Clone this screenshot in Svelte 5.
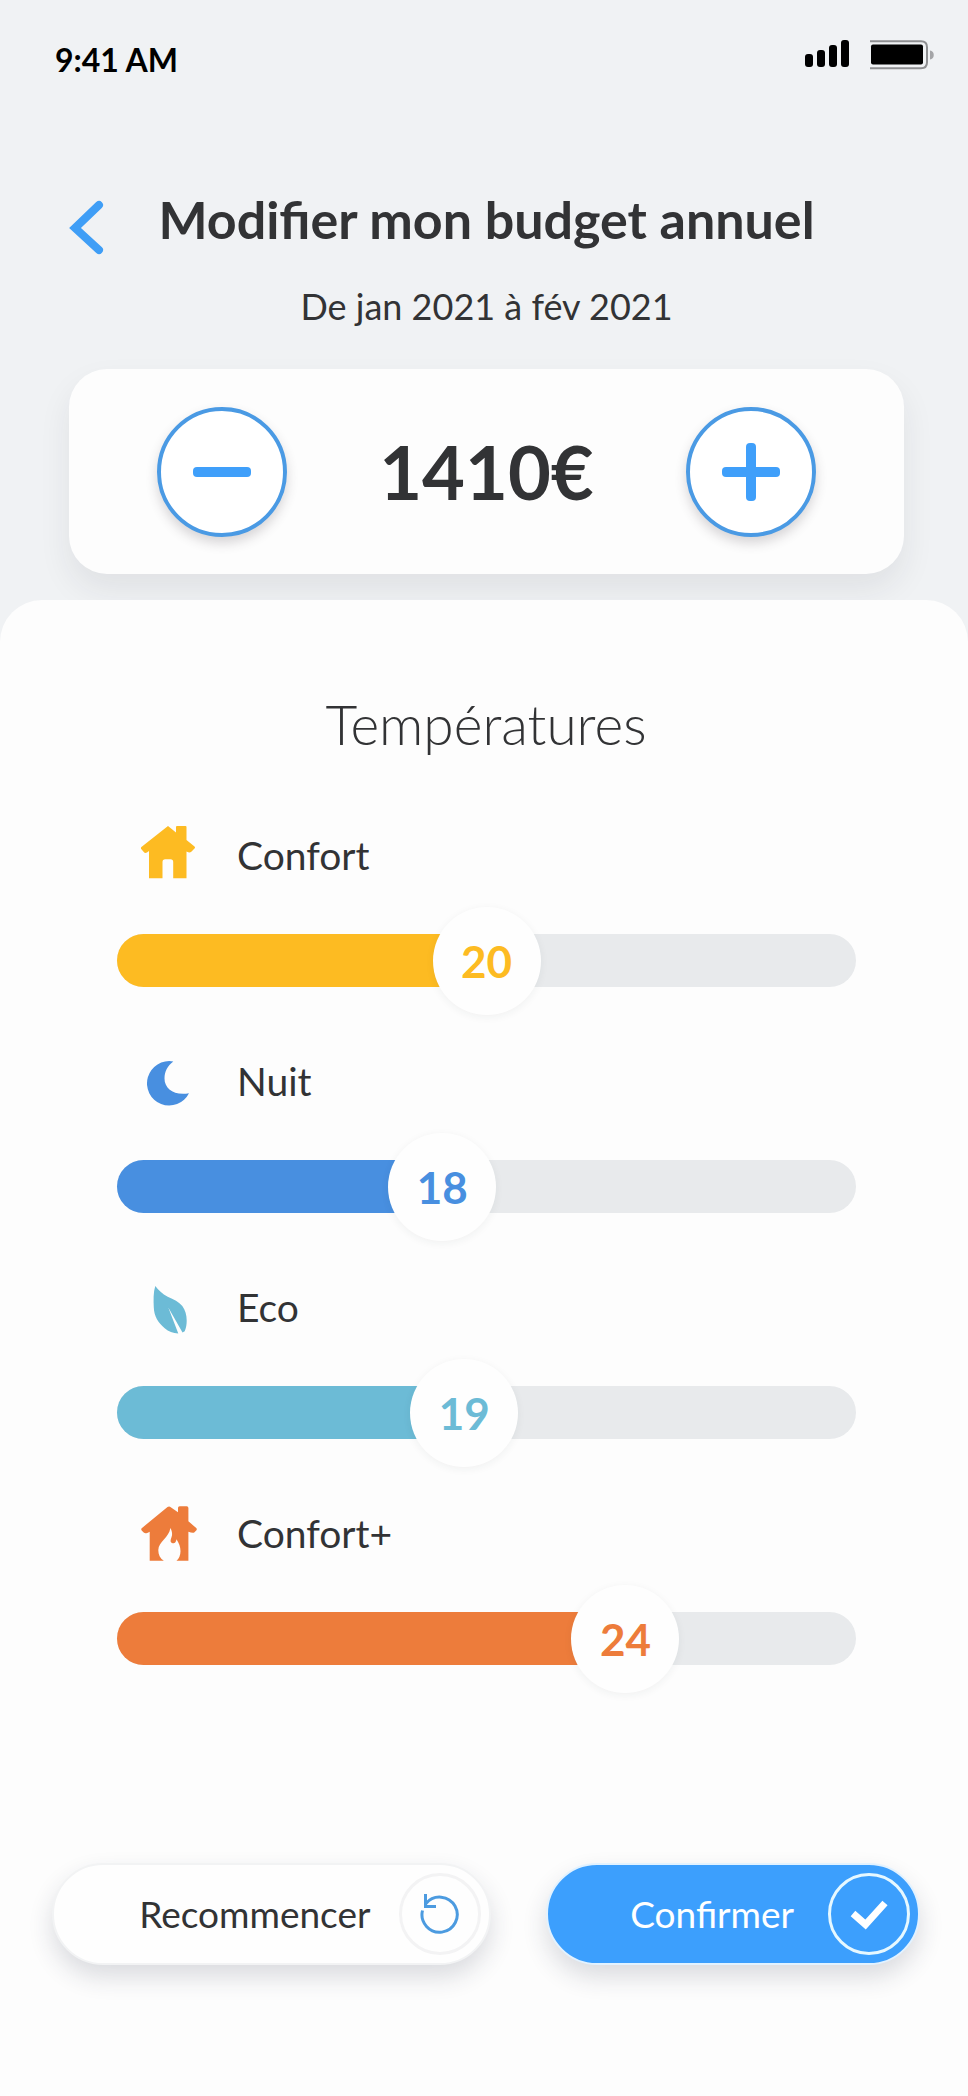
<script lang="ts">
  type Zone = { id: string; label: string; temp: number };

  const DEFAULT_BUDGET = 1410;
  const DEFAULT_ZONES: Zone[] = [
    { id: 'confort', label: 'Confort', temp: 20 },
    { id: 'nuit', label: 'Nuit', temp: 18 },
    { id: 'eco', label: 'Eco', temp: 19 },
    { id: 'confort-plus', label: 'Confort+', temp: 24 }
  ];

  let budget = $state(DEFAULT_BUDGET);
  let zones = $state(DEFAULT_ZONES.map((z) => ({ ...z })));

  // 20° sits in the middle, the warm side of the scale is wider
  function position(temp: number) {
    return temp <= 20 ? 50 + (temp - 20) * 3 : 50 + (temp - 20) * 4.7;
  }

  function reset() {
    budget = DEFAULT_BUDGET;
    zones = DEFAULT_ZONES.map((z) => ({ ...z }));
  }
</script>

<div class="screen">
  <div class="status">
    <span class="time">9:41 AM</span>
    <span class="indicators">
      <svg width="44" height="28" viewBox="0 0 44 28">
        <rect x="0" y="14" width="8" height="13" rx="3"/>
        <rect x="12" y="10" width="8" height="17" rx="3"/>
        <rect x="24" y="5" width="8" height="22" rx="3"/>
        <rect x="36" y="0" width="8" height="27" rx="3"/>
      </svg>
      <svg width="65" height="30" viewBox="0 0 65 30">
        <path d="M0 1.2h51q6 0 6 6v15q0 6-6 6H0" fill="none" stroke="#8e8f91" stroke-width="2"/>
        <rect x="1" y="4.500" width="52" height="20" rx="2"/>
        <path d="M60 10.500c5 0 5 9 0 9z" fill="#a4a5a7"/>
      </svg>
    </span>
  </div>

  <header>
    <button class="back" aria-label="Retour">
      <svg width="36" height="56" viewBox="0 0 36 56">
        <path d="M30 10L6 33l24 22" fill="none" stroke="#3f9ef6" stroke-width="8" stroke-linecap="round"/>
      </svg>
    </button>
    <h1>Modifier mon budget annuel</h1>
  </header>
  <p class="period">De jan 2021 à fév 2021</p>

  <section class="budget">
    <button class="round" aria-label="Diminuer" onclick={() => (budget -= 10)}>
      <svg width="58" height="58" viewBox="0 0 58 58">
        <rect x="0" y="24" width="58" height="10" rx="4"/>
      </svg>
    </button>
    <output class="amount">{budget}€</output>
    <button class="round" aria-label="Augmenter" onclick={() => (budget += 10)}>
      <svg width="58" height="58" viewBox="0 0 58 58">
        <rect x="0" y="24" width="58" height="10" rx="4"/>
        <rect x="24" y="0" width="10" height="58" rx="4"/>
      </svg>
    </button>
  </section>

  <main>
    <h2>Températures</h2>

    <div class="zones">
      {#each zones as zone (zone.id)}
        <div class="zone {zone.id}">
          <label for={zone.id}>
            <svg width="56" height="58" viewBox="0 0 56 58">
              {#if zone.id === 'confort'}
                <path d="M27 0l8 6.500V1q0-1 1-1h8.500q1 0 1 1v13l8 6.500q1 1 0 2l-3.500 3.600q-1.500 1.200-4.500-.6v26.800H32.200V36q0-2.700-2.700-2.700h-5.300q-2.700 0-2.700 2.700v16.300H8V25q-3.500 3-5 1.300L.2 23q-.9-1 .2-2z"/>
              {:else if zone.id === 'nuit'}
                <path d="M32.300 9.500A22.200 22.200 0 1 0 48 41.300C33 44 23.500 36.500 23.500 26.500c0-7 3-12.500 8.800-17z"/>
              {:else if zone.id === 'eco'}
                <path d="M14.300 8c3 4 7 8 12.400 10.700 6 2.600 11.300 5 14.600 9.300 3 4 4.400 9 4.400 14.500 0 4-.6 7.500-2 10.800l-2.200 1.200-14.200-25 10 26c-5.300-.2-9.800-2-13.600-5.200C17 44.500 13 38 12.800 29.500c-.3-7-.6-15 1.500-21.500z"/>
              {:else}
                <path d="M29 2.700l8 5.600V4q0-1.700 1.700-1.700h7q1.700 0 1.700 1.700v13.300l7.800 6.700q1.200 1.200 0 2.500l-2 2q-1.500 1-5.800-.8v29H35.500c2.500-2 4-5.600 4-9.500 0-4.500-1.500-8-4-12-.5 3-1.600 4.300-3.600 4-3-.3-2.600-3-1.500-5.700 1.200-3 .8-6-1-9.500-.8 5-3.500 8-6.500 11.500-3 3.300-5.500 6.300-5.600 10.500 0 4.500 1.700 8.300 5.500 10.700H8.700v-29c-3.600 2-4.500 2-6 .8l-2-2q-1-1.200 0-2.300L26.500 3q1.300-.9 2.500-.3z"/>
              {/if}
            </svg>
            {zone.label}
          </label>
          <div class="slider">
            <div class="fill" style="width: {position(zone.temp)}%"></div>
            <output class="thumb" for={zone.id} style="left: {position(zone.temp)}%">{zone.temp}</output>
            <input id={zone.id} type="range" min="10" max="30" bind:value={zone.temp}/>
          </div>
        </div>
      {/each}
    </div>

    <div class="actions">
      <button class="action restart" onclick={reset}>
        Recommencer
        <span class="badge">
          <svg width="40" height="40" viewBox="0 0 40 40" fill="none" stroke="#4c9be0" stroke-width="3">
            <path d="M2.500 16.500A17.600 17.600 0 1 0 6 9.500"/>
            <path d="M5.500 0v12.500h10.500"/>
          </svg>
        </span>
      </button>
      <button class="action confirm">
        Confirmer
        <span class="badge">
          <svg width="40" height="40" viewBox="0 0 40 40" fill="none" stroke="#fff" stroke-width="7">
            <path d="M4 19.500l12.500 11L36 9"/>
          </svg>
        </span>
      </button>
    </div>
  </main>
</div>

<style>
  :global(body) {
    margin: 0;
    background: #f0f2f4;
  }

  .screen {
    display: flex;
    flex-direction: column;
    min-height: 100vh;
    font-family: Lato, 'Liberation Sans', sans-serif;
    color: #323335;
    background: #f0f2f4;
  }

  button {
    padding: 0;
    border: none;
    background: none;
    font: inherit;
    color: inherit;
    cursor: pointer;
  }

  svg {
    display: block;
    flex-shrink: 0;
  }

  .status {
    display: flex;
    justify-content: space-between;
    padding: 40px 33px 0 55px;
    color: #000;
  }

  .time {
    font-size: 32px;
    font-weight: 700;
    line-height: 40px;
  }

  .indicators {
    display: flex;
    gap: 21px;
  }

  header {
    display: grid;
    grid-template-columns: 48px 1fr 48px;
    padding: 107px 64px 0 69px;
  }

  .back {
    display: flex;
    align-items: flex-end;
  }

  .back svg {
    overflow: visible;
  }

  h1 {
    margin: 0;
    font-size: 52px;
    font-weight: 700;
    line-height: 64px;
    text-align: center;
    white-space: nowrap;
  }

  .period {
    margin: 33px 0 41px;
    padding: 0 64px 0 69px;
    font-size: 36px;
    line-height: 44px;
    text-align: center;
  }

  .budget {
    display: flex;
    align-items: center;
    justify-content: space-between;
    margin: 0 64px 26px 69px;
    padding: 38px 88px 37px;
    border-radius: 38px;
    background: #fdfdfd;
    box-shadow: 0 16px 32px rgba(40, 44, 50, 0.08);
  }

  .round {
    display: flex;
    align-items: center;
    justify-content: center;
    box-sizing: border-box;
    width: 130px;
    height: 130px;
    border: 4px solid #4a9ae4;
    border-radius: 50%;
    background: #fff;
    fill: #3f9ffa;
    box-shadow: 0 6px 12px rgba(60, 50, 60, 0.2);
  }

  .amount {
    font-size: 74px;
    font-weight: 700;
    line-height: 90px;
  }

  main {
    flex: 1;
    padding: 92px 48px 130px 52px;
    border-radius: 42px 42px 0 0;
    background: #fdfdfd;
  }

  h2 {
    margin: 0 0 71px;
    font-size: 55px;
    font-weight: 300;
    line-height: 64px;
    text-align: center;
  }

  .zones {
    display: flex;
    flex-direction: column;
    gap: 66px;
    padding: 0 64px 0 65px;
  }

  label {
    display: flex;
    align-items: center;
    gap: 40px;
    height: 56px;
    margin-bottom: 51px;
    padding-left: 24px;
    font-size: 39px;
    line-height: 46px;
  }

  .confort {
    --tone: #fdbb22;
  }

  .nuit {
    --tone: #488fe0;
  }

  .eco {
    --tone: #6cbbd6;
  }

  .confort-plus {
    --tone: #ed7c3b;
  }

  label svg {
    fill: var(--tone);
  }

  .slider {
    position: relative;
    height: 53px;
    border-radius: 27px;
    background: #e8eaec;
  }

  .fill {
    height: 100%;
    border-radius: 27px 0 0 27px;
    background: var(--tone);
  }

  .thumb {
    position: absolute;
    top: 50%;
    display: flex;
    align-items: center;
    justify-content: center;
    width: 108px;
    height: 108px;
    border-radius: 50%;
    background: #fefefe;
    box-shadow: 0 2px 8px rgba(40, 44, 50, 0.06);
    color: var(--tone);
    font-size: 44px;
    font-weight: 700;
    transform: translate(-50%, -50%);
  }

  input {
    position: absolute;
    inset: 0;
    width: 100%;
    height: 100%;
    margin: 0;
    opacity: 0;
    cursor: pointer;
  }

  .actions {
    display: grid;
    grid-template-columns: 20fr 17fr;
    gap: 55px;
    margin-top: 198px;
  }

  .action {
    display: flex;
    align-items: center;
    justify-content: flex-end;
    gap: 29px;
    padding: 8px;
    border: 2px solid #f2f3f4;
    border-radius: 51px;
    background: #fefefe;
    font-size: 37px;
    line-height: 44px;
    box-shadow: 0 12px 24px rgba(40, 44, 70, 0.16);
  }

  .confirm {
    gap: 34px;
    border-color: #e2f2ff;
    background: #3c9ffd;
    color: #fff;
  }

  .badge {
    display: flex;
    align-items: center;
    justify-content: center;
    box-sizing: border-box;
    width: 82px;
    height: 82px;
    border: 3px solid #f3f3f4;
    border-radius: 50%;
  }

  .confirm .badge {
    border-color: #e6f8ff;
  }
</style>
